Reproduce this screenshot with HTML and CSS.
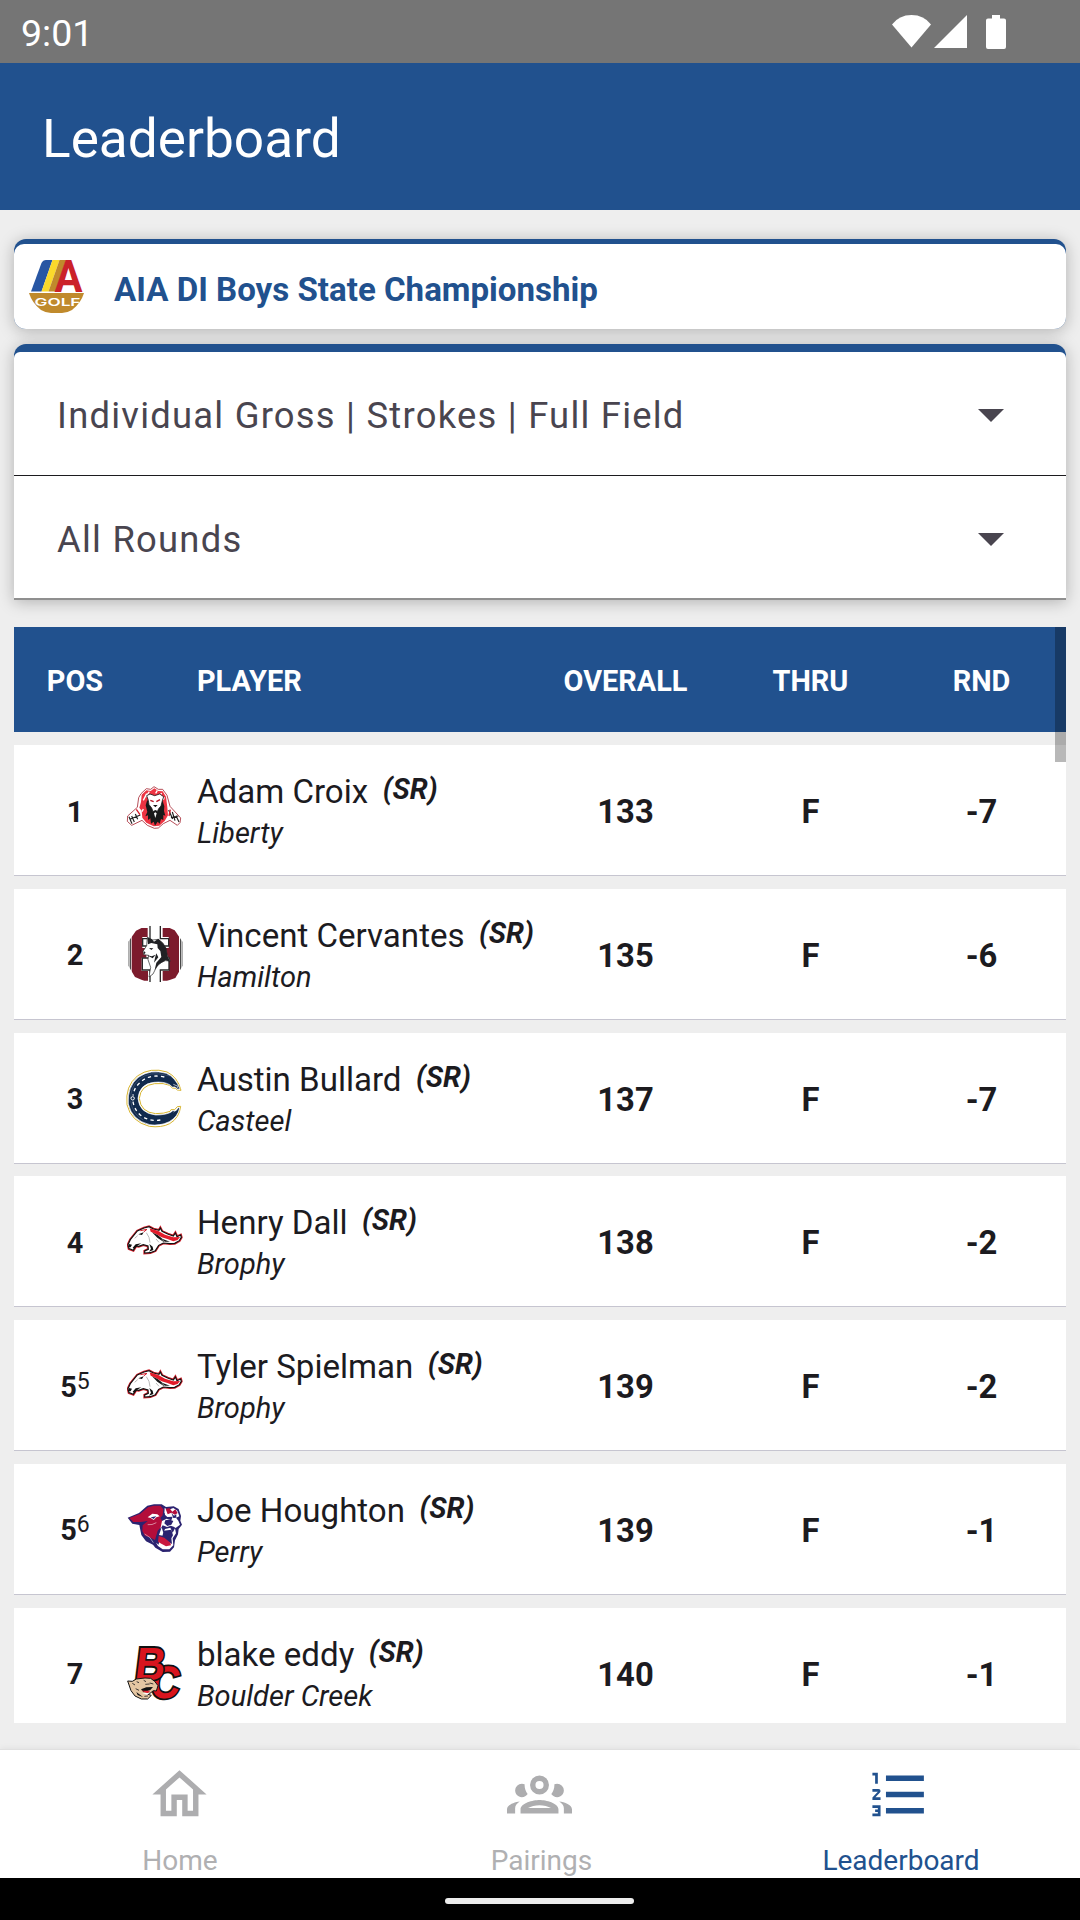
FILE: index.html
```
<!DOCTYPE html>
<html lang="en">
<head>
  <meta charset="utf-8">
  <title>Leaderboard</title>
  <meta name="viewport" content="width=device-width, initial-scale=1.0">
  <link rel="stylesheet" href="styles.css">
</head>
<body>
  <!-- shared school logos -->
  <svg class="defs" width="0" height="0">
    <symbol id="logo-brophy" viewBox="51 39 168 168">
      <path id="bronco" d="M54 134L61 119L82 93L102 84L117 80L130 87L147 91L151 84L156 94L173 102L190 108L196 99L201 110L212 105L214 112L208 122L194 130L180 131L160 129L146 136L136 152L121 158L104 159L104 153L115 148L114 138L100 134L86 139L78 138L70 151L57 146Z" fill="#fff" stroke="#d21f2b" stroke-width="8"/>
      <path d="M54 134L61 119L82 93L102 84L117 80L130 87L147 91L151 84L156 94L173 102L190 108L196 99L201 110L212 105L214 112L208 122L194 130L180 131L160 129L146 136L136 152L121 158L104 159L104 153L115 148L114 138L100 134L86 139L78 138L70 151L57 146Z" fill="#fff" stroke="#111" stroke-width="3.500"/>
      <path d="M119 85L145 93L165 104L190 112L210 111L203 120L190 124L172 117L155 112L136 101L122 95Z" fill="#e31b2a"/>
      <path d="M126 97L143 105L158 117L180 125L160 125L142 113Z" fill="#161616"/>
      <path d="M57 132L66 134L62 142L57 142ZM68 143L77 133L94 130L82 137L72 147ZM118 132L128 140L130 150L117 155L123 146ZM85 103L101 97L96 105Z" fill="#111"/>
      <path d="M91 92L111 88L101 96" fill="none" stroke="#d21f2b" stroke-width="3"/>
      <path d="M109 98L117 112L120 128M74 115L83 107M155 118L165 126M138 117L147 127" fill="none" stroke="#aaa" stroke-width="2.500"/>
    </symbol>
  </svg>

  <div class="status-bar">
    <span class="clock">9:01</span>
    <svg class="status-icons" width="120" height="36" viewBox="890 13 120 36" fill="#fff">
      <path d="M892 23.500Q899 14 911.500 14T931 23.500L911.500 46.500Z"/>
      <path d="M934 47L967 14V47Z"/>
      <path d="M992 14h8v3.500h4a2 2 0 0 1 2 2v26.500a2 2 0 0 1-2 2h-16a2 2 0 0 1-2-2v-26.500a2 2 0 0 1 2-2h4z"/>
    </svg>
  </div>

  <header class="app-bar">
    <h1>Leaderboard</h1>
  </header>

  <main class="content">
    <div class="event-card">
      <div class="event-body">
        <svg class="event-logo" width="57" height="55" viewBox="28 259 57 55">
          <path d="M31 291.500L41.500 263Q43 260 46 260H52.500L41.500 291.500Z" fill="#2856a3"/>
          <path d="M41.500 291.500L52.500 260H59.500L48.500 291.500Z" fill="#fbd92b"/>
          <path d="M48.500 291.500L59.500 260H66L55.500 291.500Z" fill="#c08a2c"/>
          <text class="mark-a" x="54.500" y="291.500" textLength="28" lengthAdjust="spacingAndGlyphs">A</text>
          <path d="M29 293H84Q81 303 72 310Q67 313 62 313H51Q46 313 41 310Q32 303 29 293Z" fill="#c08a2c"/>
          <text class="mark-golf" x="34.500" y="306" textLength="46" lengthAdjust="spacingAndGlyphs">GOLF</text>
        </svg>
        <span class="event-name">AIA DI Boys State Championship</span>
      </div>
    </div>

    <div class="filter-card">
      <div class="select">
        <span>Individual Gross | Strokes | Full Field</span>
        <svg width="26" height="13" viewBox="0 0 26 13"><path d="M0 0H26L13 13Z" fill="#49454f"/></svg>
      </div>
      <div class="select last">
        <span>All Rounds</span>
        <svg width="26" height="13" viewBox="0 0 26 13"><path d="M0 0H26L13 13Z" fill="#49454f"/></svg>
      </div>
    </div>

    <div class="board">
      <div class="row head">
        <div class="pos">POS</div>
        <div></div>
        <div>PLAYER</div>
        <div class="num">OVERALL</div>
        <div class="num">THRU</div>
        <div class="num">RND</div>
      </div>

      <div class="row">
        <div class="pos">1</div>
        <svg class="logo" viewBox="51 35 168 168">
          <path d="M93 70L109 55L122 57L132 49L145 57L158 57L171 75L180 108L212 143L210 157L202 165L180 150L160 160L145 173L133 174L112 165L96 150L65 165L52 153L53 137L82 111L86 82Z" fill="#fff" stroke="#a72a36" stroke-width="2.500"/>
          <path d="M95 73L109 60L122 62L133 54L145 62L158 63L168 79L172 111L174 135L164 152L148 166L131 168L109 157L97 142L95 121L88 112L93 95Z" fill="#ee3442"/>
          <path d="M100 90L110 70M118 64L107 80M142 60L137 69M155 68L151 74M163 81L160 88M96 124L100 116" stroke="#fff" stroke-width="4"/>
          <path d="M112 88L107 105L112 125L106 138L114 135L114 149L121 144L123 160L131 154L135 166L143 154L149 160L153 146L160 149L160 134L166 136L162 122L163 108L157 88L150 108L136 120L120 108Z" fill="#191919"/>
          <path d="M110 76L120 71L134 76L149 71L161 79L157 91L153 107L146 115L142 124L129 124L125 113L117 103L115 90Z" fill="#fff" stroke="#191919" stroke-width="2.500"/>
          <path d="M121 90L131 94M150 88L139 94" stroke="#b41222" stroke-width="4"/>
          <path d="M129 104H143L136 111ZM130 122L136 119L143 122L140 129L136 125L132 129Z" fill="#191919"/>
          <path d="M132 129L136 126L140 129L136 143Z" fill="#fff"/>
          <path d="M57 139L66 160M65 137L73 155M76 131L83 147M60 147L91 134M176 119L188 146M187 125L195 151M198 136L207 155M183 142L205 137" stroke="#222" stroke-width="3.500"/>
          <path d="M79 117L90 133M181 118L177 137" stroke="#d91e2d" stroke-width="4"/>
        </svg>
        <div class="player">
          <div class="name">Adam Croix<span class="grade">(SR)</span></div>
          <div class="school">Liberty</div>
        </div>
        <div class="num">133</div>
        <div class="num">F</div>
        <div class="num">-7</div>
      </div>

      <div class="row">
        <div class="pos">2</div>
        <svg class="logo" viewBox="51 46 168 168">
          <clipPath id="oval"><path d="M55 93L78 60L108 45H164L194 59L218 94V165L196 202L160 215H112L75 199L55 165Z"/></clipPath>
          <g clip-path="url(#oval)">
            <path d="M50 40H225V220H50Z" fill="#fff"/>
            <path d="M56 85V180M217 85V180M61 80V185M212 80V185" stroke="#282828" stroke-width="3"/>
            <path d="M65 52H113V79H97V112H109V141H95V181H114V210H65ZM207 52H158V79H176V112H164V141H177V181H158V210H207Z" fill="#7c1b2c"/>
            <path d="M120 45V84H98V106H116M151 45V84H176V106H157M120 215V178H97V142H115M151 215V178H177V142H158" fill="none" stroke="#282828" stroke-width="4"/>
          </g>
          <path d="M112 80L128 88L144 86L158 96L167 111L172 135L181 151L166 150L155 155L141 166L129 190L117 199L122 170L114 147L116 134L101 132L99 122L110 105Z" fill="#fff" stroke="#222" stroke-width="2"/>
          <path d="M112 80L126 86L132 93L145 84L160 99L169 113L172 135L181 153L167 149L147 161L134 178L139 156L154 139L151 121L143 112L142 101L124 97L114 101Z" fill="#202124"/>
          <path d="M117 112L130 113L124 118ZM101 120L107 126L102 131ZM111 134L125 137L137 132L128 143ZM139 128L145 140L132 156L135 142Z" fill="#202124"/>
        </svg>
        <div class="player">
          <div class="name">Vincent Cervantes<span class="grade">(SR)</span></div>
          <div class="school">Hamilton</div>
        </div>
        <div class="num">135</div>
        <div class="num">F</div>
        <div class="num">-6</div>
      </div>

      <div class="row">
        <div class="pos">3</div>
        <svg class="logo" viewBox="51 58 168 168">
          <path d="M213 119L202 118L196 113L187 112L179 104Q162 96 134 99Q92 104 88 143Q92 185 137 189Q164 189 180 182L183 177L194 177L202 168L212 167Q208 202 179 219Q154 232 118 227Q63 213 51 162Q45 106 82 76Q121 48 171 64Q203 79 213 119Z" fill="#fff" stroke="#d8b52f" stroke-width="3"/>
          <path d="M210 115L202 115L195 109L187 109L179 102Q161 92 132 95Q88 100 84 143Q88 188 137 193Q168 193 184 184L188 180L198 180L205 171L209 172Q204 198 178 213Q150 227 119 222Q66 209 55 160Q51 108 85 80Q122 54 169 68Q196 80 210 115Z" fill="#112a4d" stroke="#fff" stroke-width="2"/>
          <path d="M163 79Q116 68 88 98Q72 112 69 135M69 153Q74 182 98 198Q125 215 161 206" fill="none" stroke="#fff" stroke-width="4" stroke-dasharray="10 10"/>
          <path d="M179 76Q116 57 85 89Q62 109 62 144M62 150Q66 190 100 208" fill="none" stroke="#8995aa" stroke-width="1"/>
          <circle cx="68" cy="143" r="5" fill="#112a4d" stroke="#fff" stroke-width="3"/>
          <path d="M190 101L204 107L201 112M191 184L202 173" fill="none" stroke="#fff" stroke-width="2"/>
        </svg>
        <div class="player">
          <div class="name">Austin Bullard<span class="grade">(SR)</span></div>
          <div class="school">Casteel</div>
        </div>
        <div class="num">137</div>
        <div class="num">F</div>
        <div class="num">-7</div>
      </div>

      <div class="row">
        <div class="pos">4</div>
        <svg class="logo"><use href="#logo-brophy"/></svg>
        <div class="player">
          <div class="name">Henry Dall<span class="grade">(SR)</span></div>
          <div class="school">Brophy</div>
        </div>
        <div class="num">138</div>
        <div class="num">F</div>
        <div class="num">-2</div>
      </div>

      <div class="row">
        <div class="pos">5<span class="tie">5</span></div>
        <svg class="logo"><use href="#logo-brophy"/></svg>
        <div class="player">
          <div class="name">Tyler Spielman<span class="grade">(SR)</span></div>
          <div class="school">Brophy</div>
        </div>
        <div class="num">139</div>
        <div class="num">F</div>
        <div class="num">-2</div>
      </div>

      <div class="row">
        <div class="pos">5<span class="tie">6</span></div>
        <svg class="logo" viewBox="51 48 168 168">
          <path d="M53 98L87 84L112 62L132 58H155L168 66L191 64L206 72L213 93L211 107L216 119L206 132L204 148L195 166L192 187L180 200L158 201L136 188L129 179L108 169L94 150L88 120L67 116Z" fill="#2b2370"/>
          <path d="M58 99L91 86L114 67L131 62H151L160 73L158 91L151 99L159 112L154 125L143 137L135 165L119 157L105 152L97 138L98 121L113 108L92 111L70 111Z" fill="#b30d3b"/>
          <path d="M164 69L174 75L190 69L202 77L208 94L198 98L205 107L210 119L197 129L191 125L182 122L171 126L158 121L151 132L156 108L170 101L184 106L188 95L172 96L163 88Z" fill="#fff"/>
          <path d="M167 72L178 69L187 80L196 73L203 84L195 89L184 83L173 88Z" fill="#b30d3b"/>
          <path d="M158 88L165 84L164 97ZM184 84L192 92L199 88L199 98L190 99Z" fill="#2b2370"/>
          <path d="M113 97L127 86L142 88L149 94L139 97L131 105L122 99Z" fill="#fff"/>
          <path d="M122 97L139 94L131 102Z" fill="#2b2370"/>
          <path d="M166 106Q176 101 190 108L184 119L172 123L163 115Z" fill="#2b2370"/>
          <path d="M155 127L160 144L165 132L181 128L188 143L195 130L198 145L188 160L190 181L178 193L158 193L144 183L138 173L146 179L149 156L158 173L163 153L147 150Z" fill="#fff"/>
          <path d="M161 137L184 134L189 151L184 160L186 177L170 168L156 158Z" fill="#2b2370"/>
          <path d="M146 153L163 158L181 173L183 181L168 184L154 176L144 170Z" fill="#c9193f"/>
          <path d="M104 147Q122 155 130 173M113 119Q126 121 139 113" fill="none" stroke="#fff" stroke-width="1.500"/>
        </svg>
        <div class="player">
          <div class="name">Joe Houghton<span class="grade">(SR)</span></div>
          <div class="school">Perry</div>
        </div>
        <div class="num">139</div>
        <div class="num">F</div>
        <div class="num">-1</div>
      </div>

      <div class="row">
        <div class="pos">7</div>
        <svg class="logo" viewBox="51 43 168 168">
          <g class="bc" transform="skewX(-7)">
            <text class="bc-c" x="142" y="201" textLength="88" lengthAdjust="spacingAndGlyphs">C</text>
            <text class="bc-b" x="89" y="147" textLength="90" lengthAdjust="spacingAndGlyphs">B</text>
          </g>
          <path d="M53 151L67 152L79 145L105 142L122 143L134 152L144 165L139 181L130 180L120 188L104 188L124 194L113 205L94 205L75 196L63 180Z" fill="#e5c6a2" stroke="#111" stroke-width="3"/>
          <path d="M93 176L109 170L129 169L121 178L101 185ZM79 184L100 200L83 193Z" fill="#111"/>
          <path d="M94 180L121 180L113 188Z" fill="#e42032"/>
          <path d="M67 158L75 163M80 153L87 156M101 149L108 153M119 157L130 160M106 161L119 160M77 174L87 179M103 197L114 196" stroke="#413a35" stroke-width="3"/>
          <path d="M97 187H119L111 193Z" fill="#fff"/>
        </svg>
        <div class="player">
          <div class="name">blake eddy<span class="grade">(SR)</span></div>
          <div class="school">Boulder Creek</div>
        </div>
        <div class="num">140</div>
        <div class="num">F</div>
        <div class="num">-1</div>
      </div>

      <div class="scrollbar"></div>
    </div>
  </main>

  <nav class="tabs">
    <a class="tab">
      <svg width="65" height="65" viewBox="0 0 24 24"><path d="M12 5.690L17 10.190V18H15V12H9V18H7V10.190L12 5.690M12 3L2 12H5V20H11V14H13V20H19V12H22L12 3Z"/></svg>
      <span>Home</span>
    </a>
    <a class="tab">
      <svg width="65" height="65" viewBox="0 0 24 24"><path d="M12,5A3.5,3.5 0 0,0 8.500,8.500A3.500,3.500 0 0,0 12,12A3.500,3.500 0 0,0 15.500,8.500A3.500,3.500 0 0,0 12,5M12,7A1.500,1.500 0 0,1 13.500,8.500A1.500,1.500 0 0,1 12,10A1.500,1.500 0 0,1 10.500,8.500A1.500,1.500 0 0,1 12,7M5.500,8A2.500,2.500 0 0,0 3,10.500C3,11.440 3.530,12.250 4.290,12.680C4.650,12.880 5.060,13 5.500,13C5.940,13 6.350,12.880 6.710,12.680C7.080,12.470 7.390,12.170 7.620,11.810C6.890,10.860 6.500,9.700 6.500,8.500C6.500,8.410 6.500,8.310 6.500,8.220C6.200,8.080 5.860,8 5.500,8M18.500,8C18.140,8 17.800,8.080 17.500,8.220C17.500,8.310 17.500,8.410 17.500,8.500C17.500,9.700 17.110,10.860 16.380,11.810C16.500,12 16.630,12.150 16.780,12.300C16.940,12.450 17.100,12.580 17.290,12.680C17.650,12.880 18.060,13 18.500,13C18.940,13 19.350,12.880 19.710,12.680C20.470,12.250 21,11.440 21,10.500A2.500,2.500 0 0,0 18.500,8M12,14C9.660,14 5,15.170 5,17.500V19H19V17.500C19,15.170 14.340,14 12,14M4.710,14.550C2.780,14.780 0,15.760 0,17.500V19H3V17.070C3,16.060 3.690,15.220 4.710,14.550M19.290,14.550C20.310,15.220 21,16.060 21,17.070V19H24V17.500C24,15.760 21.220,14.780 19.290,14.550M12,16C13.530,16 15.240,16.500 16.230,17H7.770C8.760,16.500 10.470,16 12,16Z"/></svg>
      <span class="pairings">Pairings</span>
    </a>
    <a class="tab active">
      <svg width="65" height="65" viewBox="0 0 24 24"><path d="M7,13V11H21V13H7M7,19V17H21V19H7M7,7V5H21V7H7M3,8V5H2V4H4V8H3M2,17V16H5V20H2V19H4V18.500H3V17.500H4V17H2M4.250,10A0.750,0.750 0 0,1 5,10.750C5,10.950 4.920,11.140 4.790,11.270L3.120,13H5V14H2V13.080L4,11H2V10H4.250Z"/></svg>
      <span>Leaderboard</span>
    </a>
  </nav>
  <div class="gesture-bar"><div class="pill"></div></div>
</body>
</html>
```

FILE: styles.css
```
* {
  box-sizing: border-box;
}

body {
  margin: 0;
  width: 1080px;
  height: 1920px;
  display: flex;
  flex-direction: column;
  overflow: hidden;
  background-color: #eeeeee;
  color: #1c1b1f;
  font-family: Roboto, sans-serif;
}

svg {
  display: block;
  overflow: visible;
}

.defs {
  position: absolute;
}

.status-bar {
  height: 63px;
  flex: none;
  display: flex;
  justify-content: space-between;
  align-items: center;
  padding: 0 70px 0 21px;
  background-color: #757575;
  color: #fff;
}

.clock {
  font-size: 37.5px;
  line-height: 44px;
  padding-top: 3px;
}

.app-bar {
  height: 147px;
  flex: none;
  display: flex;
  align-items: center;
  padding-left: 42px;
  background-color: #21518e;
  color: #fff;
}

.app-bar h1 {
  margin: 4px 0 0;
  font-size: 53.2px;
  line-height: 62px;
  font-weight: 400;
}

.content {
  flex: 1;
  min-height: 0;
  display: flex;
  flex-direction: column;
  padding: 29px 14px 26px;
}

.event-card {
  flex: none;
  height: 90px;
  padding-top: 5px;
  border-radius: 12px;
  background-color: #21518e;
  box-shadow: 0 2px 16px rgba(0, 0, 0, 0.26);
}

.event-body {
  height: 85px;
  display: flex;
  align-items: center;
  padding-left: 14px;
  border-radius: 10px 10px 12px 12px;
  background-color: #fff;
}

.event-name {
  margin: 5px 0 0 29px;
  font-size: 33.1px;
  font-weight: 700;
  color: #21518e;
}

.mark-a {
  font-size: 44px;
  font-weight: 700;
  fill: #cb2229;
}

.mark-golf {
  font-family: Inter, sans-serif;
  font-size: 11px;
  font-weight: 600;
  fill: #fff;
}

.filter-card {
  flex: none;
  height: 256px;
  margin-top: 15px;
  padding-top: 8px;
  border-radius: 12px 12px 0 0;
  background-color: #21518e;
  box-shadow: 0 2px 16px rgba(0, 0, 0, 0.26);
}

.select {
  height: 124px;
  display: flex;
  align-items: center;
  justify-content: space-between;
  padding: 4px 62px 0 43px;
  border-bottom: 1px solid #1c1b1f;
  border-radius: 6px 6px 0 0;
  background-color: #fff;
  color: #49454f;
  font-size: 36.4px;
  letter-spacing: 1.23px;
}

.select.last {
  border-bottom: 2px solid #8f8f8f;
  border-radius: 0;
}

.board {
  position: relative;
  flex: 1;
  min-height: 0;
  margin-top: 27px;
  overflow: hidden;
}

.row {
  display: grid;
  grid-template-columns: 113px 70px 339px 180px 190px 152px;
  align-items: center;
  height: 131px;
  margin-bottom: 12.8px;
  background-color: #fff;
  border-bottom: 1px solid #c6c5d0;
}

.row.head {
  height: 105px;
  margin-bottom: 13px;
  border-bottom: none;
  background-color: #21518e;
  color: #fff;
  font-size: 28.9px;
  font-weight: 700;
}

.pos {
  padding: 3px 0 0 9px;
  text-align: center;
  font-size: 28.9px;
  font-weight: 700;
}

.head > div {
  padding-top: 2px;
}

.tie {
  font-size: 23px;
  font-weight: 400;
  vertical-align: 8px;
  line-height: 0;
}

.logo {
  width: 56px;
  height: 56px;
}

.player {
  padding-top: 4px;
  white-space: nowrap;
}

.name {
  font-size: 33.1px;
  line-height: 42px;
}

.grade {
  margin-left: 14.5px;
  font-size: 28.9px;
  font-weight: 700;
  font-style: italic;
  vertical-align: 4px;
  line-height: 0;
}

.school {
  font-size: 29.1px;
  line-height: 40px;
  font-style: italic;
}

.num {
  padding: 4px 1px 0 0;
  text-align: center;
  font-size: 32.8px;
  font-weight: 700;
}

.head .num {
  font-size: 28.9px;
}

.bc text {
  font-family: "Liberation Sans", sans-serif;
  font-weight: 700;
  fill: #d8151e;
  stroke: #111;
  stroke-width: 11px;
  paint-order: stroke;
}

.bc .bc-b {
  font-size: 140px;
}

.bc .bc-c {
  font-size: 136px;
}

.scrollbar {
  position: absolute;
  top: 0;
  right: 0;
  width: 11px;
  height: 135px;
  background-color: rgba(0, 0, 0, 0.28);
}

.tabs {
  flex: none;
  height: 129px;
  display: grid;
  grid-template-columns: 1fr 1fr 1fr;
  border-top: 1px solid #e0e0e0;
  background-color: #fff;
  box-shadow: 0 -1px 6px rgba(0, 0, 0, 0.06);
}

.tab {
  display: flex;
  flex-direction: column;
  align-items: center;
  padding-top: 12px;
  color: #b0b0b2;
  fill: #adadaf;
  font-size: 28px;
  line-height: 34px;
}

.tab svg {
  margin-right: 1px;
}

.tab span {
  margin-top: 17px;
}

.tab .pairings {
  padding-left: 3px;
}

.tab.active {
  color: #21518e;
  fill: #21518e;
}

.tab.active span {
  padding-left: 2px;
}

.gesture-bar {
  flex: none;
  height: 42px;
  display: flex;
  justify-content: center;
  padding: 20px 2px 0 0;
  background-color: #000;
}

.pill {
  width: 189px;
  height: 6px;
  border-radius: 3px;
  background-color: #ececec;
}
```
